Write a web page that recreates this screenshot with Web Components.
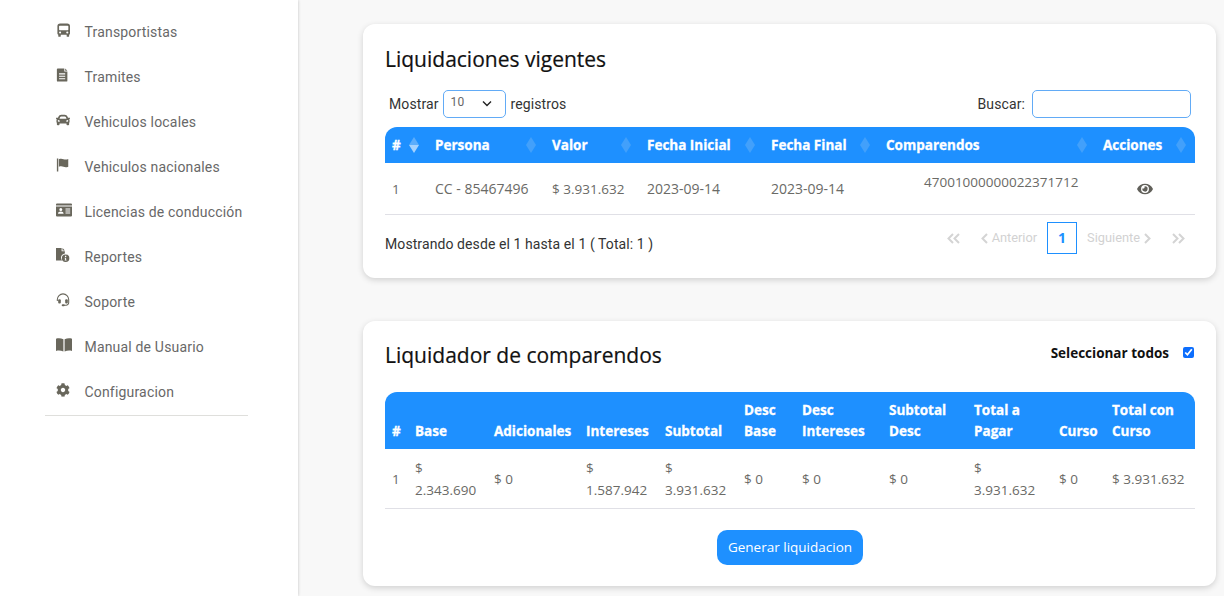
<!DOCTYPE html>
<html lang="es">
<head>
<meta charset="utf-8">
<title>Liquidaciones</title>
<style>
  html, body { margin: 0; height: 100%; overflow: hidden; background: #f8f8f8; }
</style>
</head>
<body>
<app-shell>
  <side-nav slot="nav">
    <nav-item icon="bus">Transportistas</nav-item>
    <nav-item icon="file">Tramites</nav-item>
    <nav-item icon="car">Vehiculos locales</nav-item>
    <nav-item icon="flag">Vehiculos nacionales</nav-item>
    <nav-item icon="card">Licencias de conducción</nav-item>
    <nav-item icon="report">Reportes</nav-item>
    <nav-item icon="headset">Soporte</nav-item>
    <nav-item icon="book">Manual de Usuario</nav-item>
    <nav-item icon="cog">Configuracion</nav-item>
  </side-nav>

  <panel-card heading="Liquidaciones vigentes" style="height:254px">
    <table-tools></table-tools>
    <data-table id="vigentes" sortable style="margin-top:9px"></data-table>
    <table-pager></table-pager>
  </panel-card>

  <panel-card heading="Liquidador de comparendos" style="height:265px;margin-top:43px;padding-top:19px">
    <select-all slot="aside">Seleccionar todos</select-all>
    <data-table id="liquidador" style="margin-top:20px"></data-table>
    <primary-button>Generar liquidacion</primary-button>
  </panel-card>
</app-shell>

<script>
// ICONS //
const ICONS = {
  bus: '<svg viewBox="-.8 0 16 16"><path fill-rule="evenodd" d="M4 .5h8A3.2 3.2 0 0 1 15.2 3.7V12a1.3 1.3 0 0 1-1 1.3V15a.8.8 0 0 1-.8.8h-1.2a.8.8 0 0 1-.8-.8v-1.6H4.6V15a.8.8 0 0 1-.8.8H2.6a.8.8 0 0 1-.8-.8v-1.7a1.3 1.3 0 0 1-1-1.3V3.7A3.2 3.2 0 0 1 4 .5zM3.5 3a.8.8 0 0 0-.8.8v3.7a.8.8 0 0 0 .8.8h9a.8.8 0 0 0 .8-.8V3.8a.8.8 0 0 0-.8-.8zM3.900 9.700a1.200 1.200 0 1 0 0 2.400 1.200 1.200 0 0 0 0-2.400zm8.200 0a1.200 1.200 0 1 0 0 2.400 1.200 1.200 0 0 0 0-2.400z"/></svg>',
  file: '<svg viewBox="0 0 16 16"><path fill-rule="evenodd" d="M2 .5h7.500v3.500H13V14.500a1 1 0 0 1-1 1H2a1 1 0 0 1-1-1v-13a1 1 0 0 1 1-1zM10.500.5 13 3h-2.500zM3.500 6v1.300h7V6zm0 2.800v1.300h7V8.800zm0 2.800v1.300h7v-1.300z"/></svg>',
  car: '<svg viewBox="0 0 512 512"><path d="M499.99 176h-59.87l-16.64-41.6C406.38 91.63 365.57 64 319.5 64h-127c-46.06 0-86.88 27.63-103.99 70.4L71.87 176H12.01C4.2 176-1.53 183.34.37 190.91l6 24C7.7 220.25 12.5 224 18.01 224h20.07C24.65 235.73 16 252.78 16 272v48c0 16.12 6.16 30.67 16 41.93V416c0 17.67 14.33 32 32 32h32c17.67 0 32-14.33 32-32v-32h256v32c0 17.67 14.33 32 32 32h32c17.67 0 32-14.33 32-32v-54.07c9.84-11.25 16-25.8 16-41.93v-48c0-19.22-8.65-36.27-22.07-48H494c5.51 0 10.31-3.75 11.64-9.09l6-24c1.89-7.57-3.84-14.91-11.65-14.91zm-352.06-17.83c7.29-18.22 24.94-30.17 44.57-30.17h127c19.63 0 37.28 11.95 44.57 30.17L384 208H128l19.93-49.83zM96 319.8c-19.2 0-32-12.76-32-31.9S76.8 256 96 256s48 28.71 48 47.85-28.8 15.95-48 15.95zm320 0c-19.2 0-48 3.19-48-15.95S396.8 256 416 256s32 12.76 32 31.9-12.8 31.9-32 31.9z"/></svg>',
  flag: '<svg viewBox="0 0 16 16"><path d="M1 .5h1.600v15H1zM3.300 1.300c2-.9 3.700-.6 5.300 0 1.600.6 3.200.8 5.400-.1v8.800c-2.200.9-3.800.7-5.400.1-1.600-.6-3.300-.9-5.300 0z"/></svg>',
  card: '<svg viewBox="0 0 16 14"><path fill-rule="evenodd" d="M1 .5h14a1 1 0 0 1 1 1v.9H0v-.9a1 1 0 0 1 1-1zM0 3.400h16V12.500a1 1 0 0 1-1 1H1a1 1 0 0 1-1-1zM4.800 5a1.500 1.500 0 1 0 0 3 1.500 1.500 0 0 0 0-3zM2 10.800h5.600c0-1.300-1.200-2.200-2.800-2.200S2 9.500 2 10.800zM9.500 5.500v1.100h4.700V5.500zm0 2v1.100h4.700V7.500zm0 2v1.100h4.700V9.500z"/></svg>',
  report: '<svg viewBox="1 .5 14.3 15" preserveAspectRatio="none"><path d="M1 .5h6v3.600h3.500v2.300a4.500 4.500 0 0 0-3 7.400H1zM8 .5l2.500 2.600H8z"/><path fill-rule="evenodd" d="M11.300 7.500a4 4 0 1 1 0 8 4 4 0 0 1 0-8zm-.7 1.300v1.300h1.400V8.800zm-.3 2.100v.8h.5v1.500h-.5v.8h2v-.8h-.5v-2.300z"/></svg>',
  headset: '<svg viewBox="0 0 16 16"><path fill="none" stroke="currentColor" stroke-width="1.200" d="M1.500 9V7.500a6.500 6.500 0 0 1 13 0V11a3 3 0 0 1-3 3H9"/><rect x="2.500" y="7" width="3" height="5" rx="1.200"/><rect x="10.500" y="7" width="3" height="5" rx="1.200"/><rect x="6.500" y="12.800" width="3.500" height="2.400" rx="1.200"/></svg>',
  book: '<svg viewBox="0 0 16 14"><path d="M0 .8C2.300 0 5 .2 7.400 1.300V13.500C5 12.500 2.300 12.300 0 13zM8.600 1.300C11 .2 13.700 0 16 .8V13c-2.300-.7-5-.5-7.400.5z"/></svg>',
  cog: '<svg viewBox="0 0 512 512"><path d="M487.4 315.7l-42.6-24.6c4.3-23.2 4.3-47 0-70.2l42.6-24.6c4.9-2.8 7.1-8.6 5.5-14-11.1-35.6-30-67.8-54.7-94.6-3.8-4.1-10-5.1-14.8-2.3L380.8 110c-17.9-15.4-38.5-27.3-60.8-35.1V25.8c0-5.6-3.9-10.5-9.4-11.7-36.7-8.2-74.3-7.8-109.2 0-5.5 1.2-9.4 6.1-9.4 11.7V75c-22.2 7.9-42.8 19.8-60.8 35.1L88.7 85.5c-4.9-2.8-11-1.9-14.8 2.3-24.7 26.7-43.6 58.9-54.7 94.6-1.7 5.4.6 11.2 5.5 14L67.3 221c-4.3 23.2-4.3 47 0 70.2l-42.6 24.6c-4.9 2.8-7.1 8.6-5.5 14 11.1 35.6 30 67.8 54.7 94.6 3.8 4.1 10 5.1 14.8 2.3l42.6-24.6c17.9 15.4 38.5 27.3 60.8 35.1v49.2c0 5.6 3.9 10.5 9.4 11.7 36.7 8.2 74.3 7.8 109.2 0 5.5-1.2 9.4-6.1 9.4-11.7v-49.2c22.2-7.9 42.8-19.8 60.8-35.1l42.6 24.6c4.9 2.8 11 1.9 14.8-2.3 24.7-26.7 43.6-58.9 54.7-94.6 1.5-5.5-.7-11.3-5.6-14.1zM256 336c-44.1 0-80-35.9-80-80s35.9-80 80-80 80 35.9 80 80-35.9 80-80 80z"/></svg>',
  eye: '<svg viewBox="0 0 576 512"><path d="M572.52 241.4C518.29 135.59 410.93 64 288 64S57.68 135.64 3.48 241.41a32.35 32.35 0 0 0 0 29.19C57.71 376.41 165.07 448 288 448s230.32-71.64 284.52-177.41a32.35 32.35 0 0 0 0-29.19zM288 400a144 144 0 1 1 144-144 143.93 143.93 0 0 1-144 144zm0-240a95.31 95.31 0 0 0-25.31 3.79 47.85 47.85 0 0 1-66.9 66.9A95.78 95.78 0 1 0 288 160z"/></svg>'
};

const UI_FONT = '"Open Sans", "Noto Sans", sans-serif';
const BLUE = '#1e90ff';

class AppShell extends HTMLElement {
  constructor() {
    super();
    const shadowRoot = this.attachShadow({mode: 'open'});
    shadowRoot.innerHTML = `
      <style>
        :host { display: flex; height: 596px; overflow: hidden; background: #f8f8f8; }
        main { flex: 1; display: block; padding: 24px 8px 0 65px; }
      </style>
      <slot name="nav"></slot>
      <main><slot></slot></main>
    `;
  }
}

class SideNav extends HTMLElement {
  constructor() {
    super();
    const shadowRoot = this.attachShadow({mode: 'open'});
    shadowRoot.innerHTML = `
      <style>
        :host {
          display: block;
          flex: none;
          width: 298px;
          height: 596px;
          box-sizing: border-box;
          padding: 10px 50px 0 45px;
          background: #fff;
          box-shadow: 0 0 3px rgba(0, 0, 0, .22);
        }
        hr { margin: 0; border: 0; border-top: 1px solid #dfdfdc; }
      </style>
      <slot></slot>
      <hr>
    `;
  }
}

class NavItem extends HTMLElement {
  constructor() {
    super();
    const shadowRoot = this.attachShadow({mode: 'open'});
    shadowRoot.innerHTML = `
      <style>
        :host {
          display: flex;
          height: 45px;
          padding-left: 11px;
          font: 400 14px/45px Roboto, sans-serif;
          letter-spacing: .18px;
          color: #686868;
        }
        .icon { flex: none; width: 16px; height: 14px; margin: 13px 12.5px 0 0; color: #69675c; fill: currentColor; }
        .icon svg { display: block; width: 100%; height: 100%; }
      </style>
      <span class="icon">${ ICONS[this.getAttribute('icon')].replace('<svg ', '<svg preserveAspectRatio="xMinYMid" ') }</span>
      <slot></slot>
    `;
  }
}

class PanelCard extends HTMLElement {
  constructor() {
    super();
    const shadowRoot = this.attachShadow({mode: 'open'});
    shadowRoot.innerHTML = `
      <style>
        :host {
          display: block;
          box-sizing: border-box;
          padding: 20px 21px 0 22px;
          background: #fff;
          border-radius: 12px;
          box-shadow: 0 2px 6px rgba(0, 0, 0, .16);
        }
        header { display: flex; justify-content: space-between; height: 32px; margin-bottom: 14px; }
        h2 { margin: 0; font: 500 21px/30px ${ UI_FONT }; -webkit-text-stroke: .2px #111; color: #111; }
      </style>
      <header><h2>${ this.getAttribute('heading') }</h2><slot name="aside"></slot></header>
      <slot></slot>
    `;
  }
}

class TableTools extends HTMLElement {
  constructor() {
    super();
    const shadowRoot = this.attachShadow({mode: 'open'});
    shadowRoot.innerHTML = `
      <style>
        :host {
          display: flex;
          align-items: center;
          height: 28px;
          margin: 0 4px 0 4px;
          font: 400 14px/28px Roboto, sans-serif;
          letter-spacing: .1px;
          color: #333;
        }
        .box { box-sizing: border-box; height: 28px; border: 1px solid #62abf6; border-radius: 5px; }
        .select {
          position: relative;
          width: 63px;
          margin: 0 5px 0 4px;
          padding-left: 7px;
          font-size: 12px;
          line-height: 22px;
          color: #666;
        }
        .select svg { position: absolute; right: 13px; top: 9px; width: 10px; height: 7px; }
        .grow { flex: 1; }
        input { display: block; width: 159px; margin-left: 7px; padding: 0; background: #fff; outline: 0; }
      </style>
      <span>Mostrar</span>
      <span class="box select">10<svg viewBox="0 0 10 7"><path d="M1 1.500 5 5.500l4-4" fill="none" stroke="#222" stroke-width="1.400"/></svg></span>
      <span>registros</span>
      <span class="grow"></span>
      <span>Buscar:</span>
      <input class="box" type="text" aria-label="Buscar">
    `;
  }
}

class DataTable extends HTMLElement {
  constructor() {
    super();
    this.attachShadow({mode: 'open'});
  }

  /**
   * @param {{cols: number[], head: string[], rows: string[][]}} data
   */
  set data({cols, head, rows, headHeight, cellStyle}) {
    const sort = this.hasAttribute('sortable');
    this.shadowRoot.innerHTML = `
      <style>
        :host { display: block; width: 810px; }
        table { width: 810px; table-layout: fixed; border-collapse: separate; border-spacing: 0; font-family: ${ UI_FONT }; }
        th {
          position: relative;
          height: ${ headHeight }px;
          box-sizing: border-box;
          padding: 0 7px 7px;
          vertical-align: bottom;
          text-align: left;
          font-size: 13.5px;
          font-weight: 700;
          line-height: 21px;
          -webkit-text-stroke: .3px #fff;
          color: #fff;
          background: ${ BLUE };
        }
        th:first-child { border-top-left-radius: 12px; }
        th:last-child { border-top-right-radius: 12px; }
        td {
          padding: 7px;
          font-size: 13.5px;
          line-height: 22px;
          color: #6a6a66;
          border-bottom: 1px solid #e0e0e6;
        }
        td.wide { font-size: 14px; }
        .sort { position: absolute; right: 9px; top: 10px; width: 10px; height: 16px; }
        .eye { display: block; width: 16px; height: 14px; margin-left: 34px; fill: #61605a; }
        .eye svg { display: block; width: 100%; height: 100%; }
      </style>
      <table>
        <colgroup>${ cols.map(w => `<col style="width:${ w }px">`).join('') }</colgroup>
        <thead><tr>${ head.map((h, i) => `<th>${ h }${ sort ? this.sortIcon(i === 0) : '' }</th>`).join('') }</tr></thead>
        <tbody>${ rows.map(r => `<tr>${ r.map((c, i) => `<td class="${ /[A-Z]|-/.test(c) && c.length < 14 ? 'wide' : '' }" style="${ cellStyle?.[i] || '' }">${ c === '@eye' ? `<span class="eye">${ ICONS.eye }</span>` : c }</td>`).join('') }</tr>`).join('') }</tbody>
      </table>
    `;
  }

  sortIcon(active) {
    const up = active ? '#5cadfc' : '#42a0fb';
    const down = active ? '#a6d2fe' : '#42a0fb';
    return `<svg class="sort" viewBox="0 0 10 16"><path d="M5 0l5 8H0z" fill="${ up }"/><path d="M5 16 0 8h10z" fill="${ down }"/></svg>`;
  }
}

class TablePager extends HTMLElement {
  constructor() {
    super();
    const left2 = '<svg width="13" height="11" viewBox="0 0 13 11"><path d="M6 1 1.500 5.500 6 10M12 1 7.500 5.500 12 10" fill="none" stroke="#d4d4d4" stroke-width="2"/></svg>';
    const right2 = '<svg width="13" height="11" viewBox="0 0 13 11"><path d="M1 1l4.500 4.500L1 10M7 1l4.500 4.500L7 10" fill="none" stroke="#d4d4d4" stroke-width="2"/></svg>';
    const left = '<svg width="7" height="11" viewBox="0 0 7 11"><path d="M6 1 1.500 5.500 6 10" fill="none" stroke="#d4d4d4" stroke-width="2"/></svg>';
    const right = '<svg width="7" height="11" viewBox="0 0 7 11"><path d="M1 1l4.500 4.500L1 10" fill="none" stroke="#d4d4d4" stroke-width="2"/></svg>';
    const shadowRoot = this.attachShadow({mode: 'open'});
    shadowRoot.innerHTML = `
      <style>
        :host {
          display: flex;
          align-items: center;
          justify-content: space-between;
          width: 810px;
          height: 32px;
          margin-top: 7px;
          font: 400 14px/20px Roboto, sans-serif;
          letter-spacing: .09px;
          color: #333;
        }
        div { padding-top: 12px; }
        nav { display: flex; align-items: center; padding-right: 10px; font-size: 12.8px; letter-spacing: 0; color: #d2d2d2; }
        span { display: inline-flex; align-items: center; gap: 4px; }
        .cur {
          box-sizing: border-box;
          width: 30px;
          height: 32px;
          margin: 0 10px;
          justify-content: center;
          font: 700 14px/30px ${ UI_FONT };
          color: ${ BLUE };
          border: 1px solid ${ BLUE };
        }
      </style>
      <div>Mostrando desde el 1 hasta el 1 ( Total: 1 )</div>
      <nav>
        <span style="margin-right:21px">${ left2 }</span>
        <span>${ left }Anterior</span>
        <span class="cur">1</span>
        <span>Siguiente${ right }</span>
        <span style="margin-left:21px">${ right2 }</span>
      </nav>
    `;
  }
}

class SelectAll extends HTMLElement {
  constructor() {
    super();
    const shadowRoot = this.attachShadow({mode: 'open'});
    shadowRoot.innerHTML = `
      <style>
        :host {
          display: flex;
          align-items: flex-start;
          font: 700 13.5px/26px ${ UI_FONT };
          color: #111;
        }
        input { width: 11px; height: 11px; margin: 7px 1px 0 14px; accent-color: #0d6efd; }
      </style>
      <slot></slot>
      <input type="checkbox" checked>
    `;
  }
}

class PrimaryButton extends HTMLElement {
  constructor() {
    super();
    const shadowRoot = this.attachShadow({mode: 'open'});
    shadowRoot.innerHTML = `
      <style>
        :host { display: flex; justify-content: center; margin-top: 21px; }
        button {
          height: 35px;
          padding: 0 11px;
          font: 400 13.5px/35px ${ UI_FONT };
          color: #fff;
          background: ${ BLUE };
          border: 0;
          border-radius: 10px;
        }
      </style>
      <button><slot></slot></button>
    `;
  }
}

customElements.define('app-shell', AppShell);
customElements.define('side-nav', SideNav);
customElements.define('nav-item', NavItem);
customElements.define('panel-card', PanelCard);
customElements.define('table-tools', TableTools);
customElements.define('data-table', DataTable);
customElements.define('table-pager', TablePager);
customElements.define('select-all', SelectAll);
customElements.define('primary-button', PrimaryButton);

// TABLE DATA //
document.querySelector('#vigentes').data = {
  cols: [43, 117, 95, 124, 115, 217, 99],
  headHeight: 36,
  head: ['#', 'Persona', 'Valor', 'Fecha Inicial', 'Fecha Final', 'Comparendos', 'Acciones'],
  rows: [['1', 'CC - 85467496', '$ 3.931.632', '2023-09-14', '2023-09-14', '47001000000022371712', '@eye']],
  cellStyle: ['height:37px', '', '', '', '', 'padding-bottom:21px;padding-left:45px', '']
};

document.querySelector('#liquidador').data = {
  cols: [23, 79, 92, 79, 79, 58, 87, 85, 85, 53, 90],
  headHeight: 57,
  head: ['#', 'Base', 'Adicionales', 'Intereses', 'Subtotal', 'Desc Base', 'Desc Intereses', 'Subtotal Desc', 'Total a Pagar', 'Curso', 'Total con Curso'],
  rows: [['1', '$ 2.343.690', '$ 0', '$ 1.587.942', '$ 3.931.632', '$ 0', '$ 0', '$ 0', '$ 3.931.632', '$ 0', '$ 3.931.632']],
  cellStyle: Array(11).fill('padding-top:8px')
};
</script>
</body>
</html>
